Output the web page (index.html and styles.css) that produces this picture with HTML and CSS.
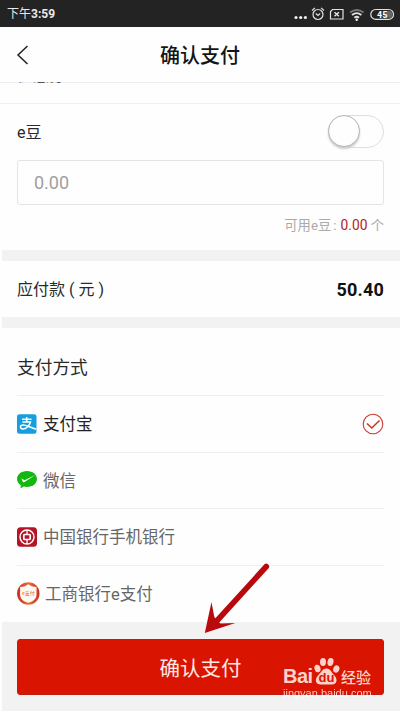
FILE: index.html
```html
<!DOCTYPE html>
<html lang="zh-CN">
<head>
<meta charset="utf-8">
<meta name="viewport" content="width=device-width, initial-scale=1">
<title>确认支付</title>
<link rel="stylesheet" href="styles.css">
</head>
<body>
<div class="screen">
  <header class="status">
    <span class="time">下午<b>3:59</b></span>
    <svg class="status-icons" width="108" height="20" viewBox="0 0 108 20" fill="none" stroke="#e2e2e2" stroke-width="1.2">
      <g fill="#f0f0f0" stroke="none"><circle cx="4" cy="13.500" r="1.600"/><circle cx="8.700" cy="13.500" r="1.600"/><circle cx="13.400" cy="13.500" r="1.600"/></g>
      <circle cx="26" cy="10.500" r="5"/><path d="M23.800 9.500l2.200 2 2.200-2M20 6.500l3-2.600M32 6.500l-3-2.600"/>
      <path d="M40.500 5.500h10.500v9.500h-12.500v-7.500z"/><path d="M42.500 8.200l4.400 4M46.900 8.200l-4.400 4" stroke-width="1.500"/>
      <path d="M58 8.500q6.800-5 13.600 0" stroke="#777" stroke-width="1.800"/><path d="M60 11q4.700-3.800 9.400 0M62.400 13.700q2.300-1.900 4.600 0" stroke-width="1.800"/><circle cx="64.700" cy="15.700" r="1.200" fill="#fff" stroke="none"/>
      <rect x="78.800" y="5.500" width="22.700" height="9.800" rx="4.900" fill="#232323"/><path d="M92 7h5a3.400 3.400 0 0 1 0 6.800h-5z" fill="#666" stroke="none"/>
      <text class="battery" x="90.200" y="13.600" text-anchor="middle">45</text>
    </svg>
  </header>
  <nav class="nav">
    <svg class="back" width="14" height="20" viewBox="0 0 14 20" fill="none" stroke="#222" stroke-width="1.500"><path d="M11.500 1L2 10l9.500 9"/></svg>
    <h1>确认支付</h1>
  </nav>
  <div class="scrolled"><span>优惠券</span></div>
  <section class="beans">
    <div class="bean-row"><span class="bean-label">e豆</span><span class="switch"><i></i></span></div>
    <div class="field">0.00</div>
    <div class="hint">可用e豆<span class="colon">:</span><b>0.00</b> 个</div>
  </section>
  <div class="gap"></div>
  <section class="due"><span>应付款 ( 元 )</span><strong>50.40</strong></section>
  <div class="gap"></div>
  <section class="methods">
    <h2>支付方式</h2>
    <div class="method selected">
      <svg width="20" height="20" viewBox="0 0 20 20"><rect width="19.500" height="19.500" y=".3" rx="2.500" fill="#159fdc"/><g fill="none" stroke="#fff" stroke-width="1.500"><path d="M5 5.300h9.500M9.700 3v5M5.500 8h8c-1.200 4-4.500 7-7.500 7-3.500 0-3.500-4 .3-4 3.700 0 6 2.600 13 4.200"/></g></svg>
      <span>支付宝</span>
      <svg class="tick" width="22" height="22" viewBox="0 0 22 22" fill="none" stroke="#c63a2d"><circle cx="11" cy="11" r="9.800" stroke-width="1.100"/><path d="M5 10.500l4.800 4.500L17.500 7.500" stroke-width="1.600"/></svg>
    </div>
    <div class="method">
      <svg width="20" height="20" viewBox="0 0 20 20"><path d="M10 1c5.700 0 10 3.600 10 8s-4.300 8-10 8c-1.200 0-2.400-.2-3.400-.5L3.500 18.600l.3-3.300C1.500 13.800 0 11.500 0 9c0-4.400 4.300-8 10-8z" fill="#12b80f"/><path d="M4.300 8.200l3.200 2.100L18.300 5 7.500 12.100c-.9.500-1.400.2-1.800-.7z" fill="#fff"/></svg>
      <span>微信</span>
    </div>
    <div class="method">
      <svg width="20" height="20" viewBox="0 0 20 20" fill="none" stroke="#fff" stroke-width="1.300"><rect y=".2" width="20" height="19.600" rx="3.500" fill="#b51425" stroke="none"/><circle cx="10" cy="10" r="7" stroke-width="1.400"/><rect x="6.800" y="7.500" width="6.400" height="5" rx=".8" stroke-width="1.700"/><path d="M10 3v4.500M10 12.500V17"/></svg>
      <span>中国银行手机银行</span>
    </div>
    <div class="method icbc">
      <svg width="23" height="23" viewBox="0 0 23 23"><defs><linearGradient id="ring" x1="0" y1="0" x2="1" y2="0"><stop offset="0" stop-color="#c52920"/><stop offset=".5" stop-color="#e8703a"/><stop offset="1" stop-color="#c93022"/></linearGradient></defs><circle cx="11.300" cy="11.500" r="11.200" fill="url(#ring)"/><path d="M11.300 2.300c2 1.600 4.700 2.600 8.200 2.600v7.800c0 4.300-4 7-8.200 8.100-4.200-1.100-8.200-3.800-8.200-8.100V4.900c3.500 0 6.200-1 8.200-2.600z" fill="#fff7f1"/><text x="11.300" y="13.200" class="micro" text-anchor="middle">e支付</text></svg>
      <span>工商银行e支付</span>
    </div>
  </section>
  <footer class="footer"><button>确认支付</button></footer>
  <svg class="arrow" width="70" height="76" viewBox="0 0 70 76"><path d="M64.300 6.500L12 64" stroke="#b8090d" stroke-width="5.600" stroke-linecap="round"/><path d="M2.800 73L9.500 42l2.800 15 6 6.500 15-.5z" fill="#b8090d"/></svg>
  <div class="watermark">
    <div class="brand"><span class="bai">Bai</span><svg width="27" height="29" viewBox="0 0 27 29"><g fill="#ffd3cc"><ellipse cx="4.500" cy="11.500" rx="3" ry="3.800" transform="rotate(-15 4.500 11.500)"/><ellipse cx="10" cy="5" rx="3" ry="4"/><ellipse cx="17.500" cy="5" rx="3" ry="4" transform="rotate(12 17.500 5)"/><ellipse cx="23.300" cy="12" rx="3" ry="3.800" transform="rotate(18 23.300 12)"/><path d="M13.500 11.500c4 0 5 4 7.500 6.500 4.500 4.500 2.500 9.500-2 9.500H8c-5.500 0-7-5-2.500-9.500 3-3 4-6.500 8-6.500z"/></g><text class="du" x="13.500" y="25" text-anchor="middle">du</text></svg><span class="jingyan">经验</span></div>
    <div class="domain">jingyan.baidu.com</div>
  </div>
</div>
</body>
</html>
```
FILE: styles.css
```css
* { box-sizing: border-box; }
body { margin: 0; background: #fff; }
.screen {
  position: relative;
  width: 400px;
  height: 711px;
  overflow: hidden;
  background: #fefefe;
  color: #2a2a2a;
  font: 16px/1.4 Roboto, "Noto Sans CJK SC", sans-serif;
}
.status {
  display: flex;
  justify-content: space-between;
  align-items: center;
  height: 27px;
  padding: 0 0 0 7px;
  background: #232323;
  color: #e8e8e8;
}
.time { padding-top: 2px; font-size: 12px; }
.time b { font-weight: 700; }
.battery { font: 700 9px Roboto, sans-serif; fill: #fff; stroke: none; }
.nav {
  display: grid;
  grid-template-columns: 60px 1fr 60px;
  align-items: center;
  height: 55px;
}
.back { margin-left: 16px; }
.nav h1 { margin: 0; padding-top: 2px; font-size: 20px; font-weight: 500; text-align: center; color: #151515; }
.scrolled {
  height: 22px;
  overflow: hidden;
  box-shadow: inset 0 1px #ececec;
  border-bottom: 1px solid #f0f0f0;
}
.scrolled span { display: block; margin-top: -14px; padding-left: 17px; line-height: 16px; color: #555; }
.beans { height: 146px; padding: 10px 16px 0 17px; }
.gap { height: 11px; margin-left: 2px; background: #f2f2f2; }
.bean-row { display: flex; align-items: center; justify-content: space-between; height: 34px; }
.bean-label { padding-top: 4px; }
.switch { display: flex; width: 56px; height: 33px; border: 1px solid #ddd; border-radius: 17px; }
.switch i { width: 32px; height: 32px; margin: -1px; border: 1px solid #b5b5b5; border-radius: 50%; box-shadow: 0 2px 2px #ccc; background: #fefefe; }
.field {
  height: 45px;
  margin-top: 12px;
  padding-left: 16px;
  border: 1.5px solid #e4e4e4;
  border-radius: 3px;
  color: #a0a0a0;
  font-size: 18px;
  line-height: 43px;
}
.hint { margin-top: 10px; text-align: right; font-size: 13.3px; line-height: 20px; color: #aaa; }
.colon { padding: 0 4px 0 2px; }
.hint b { font-size: 13.8px; font-weight: 400; color: #b42218; }
.due {
  display: flex;
  align-items: center;
  justify-content: space-between;
  height: 56px;
  padding: 2px 16px 0 17px;
}
.due strong { font-size: 18px; font-weight: 700; color: #111; letter-spacing: .2px; }
.methods { height: 294px; padding: 0 16px 0 17px; }
.methods h2 { height: 67px; margin: 0; padding-top: 13px; font-size: 17.7px; font-weight: 400; line-height: 54px; }
.method {
  display: flex;
  align-items: center;
  height: 56.6px;
  border-top: 1px solid #f0f0f0;
  color: #666;
  font-size: 16.5px;
}
.method > svg:first-child { flex: none; margin-right: 6px; }
.method > span { padding-top: 2px; }
.selected { color: #222; }
.tick { margin-left: auto; }
.method.icbc > svg:first-child { margin-right: 5px; }
.footer { height: 89px; margin-left: 2px; padding: 17px 16px 0 15px; background: #f2f2f2; }
.footer button {
  display: block;
  width: 100%;
  height: 56px;
  padding: 0;
  border: 1px solid #c41b10;
  border-radius: 3px;
  background: #d91400;
  color: #ffe9e5;
  font: 20.5px "Noto Sans CJK SC", sans-serif;
}
.arrow { position: absolute; left: 202px; top: 560px; }
.micro { font: 5px "Noto Sans CJK SC", sans-serif; fill: #d66a40; }
.watermark { position: absolute; left: 283px; top: 657px; width: 92px; color: #ffd3cc; }
.brand { display: flex; align-items: flex-end; height: 29px; white-space: nowrap; }
.bai { width: 30px; font: 700 20px/19px "Liberation Sans", sans-serif; letter-spacing: -.5px; }
.jingyan { margin-left: 1px; font: 500 15px/19px "Noto Sans CJK SC", sans-serif; }
.du { font: 700 13px "Liberation Sans", sans-serif; fill: #d91400; }
.domain {
  font: 11px/15px "Liberation Sans", sans-serif;
  white-space: nowrap;
  color: transparent;
  background: linear-gradient(#ffd3cc 9px, #fdfdfd 9px);
  -webkit-background-clip: text;
  background-clip: text;
}
```
